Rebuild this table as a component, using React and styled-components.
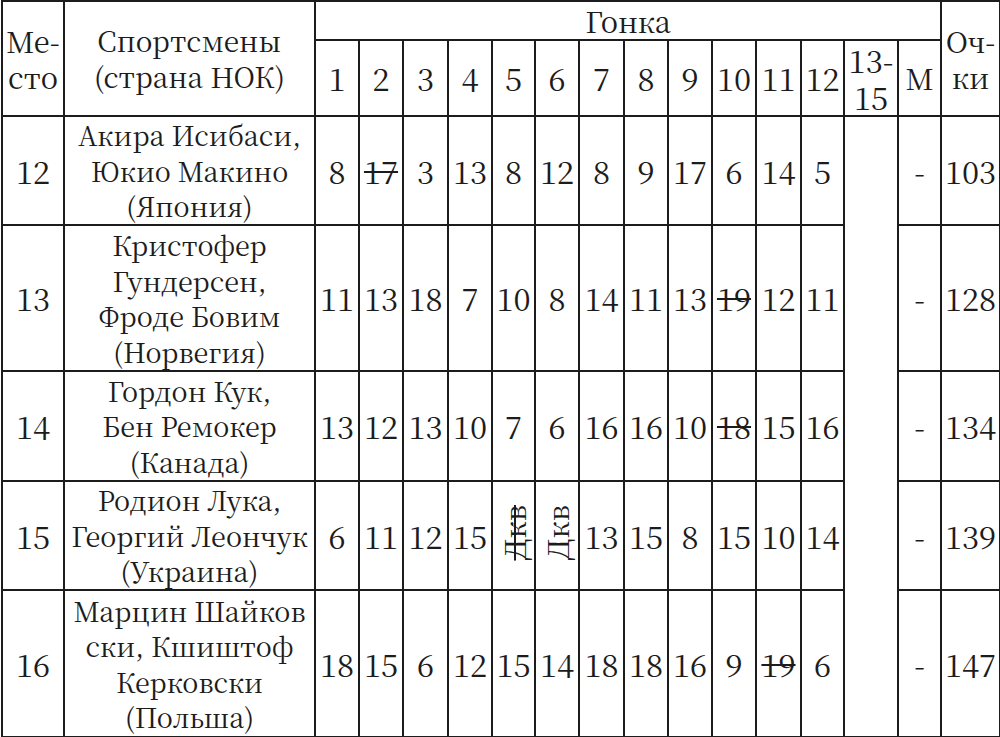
import styled, { createGlobalStyle } from "styled-components";

const GlobalStyle = createGlobalStyle`
  html, body {
    margin: 0;
    padding: 0;
    background: #fff;
  }
  body {
    font-family: "Noto Serif CJK SC", "Liberation Serif", serif;
    color: #1c1c1c;
  }
`

const Table = styled.table`
  border-collapse: collapse;
  table-layout: fixed;
  width: 999px;
  margin-left: 1px;
  color: #1c1c1c;
`

const Row = styled.tr`
  height: ${p => p.$h}px;
`

const Cell = styled.td`
  border: 2px solid #1c1c1c;
  padding: 0;
  font-family: "Noto Serif CJK SC", "Liberation Serif", serif;
  font-size: ${p => p.$size || 31}px;
  font-weight: normal;
  text-align: center;
  vertical-align: middle;
  white-space: nowrap;
  line-height: ${p => p.$lh || "35.5px"};
`

const Struck = styled.span`
  text-decoration: line-through;
  text-decoration-thickness: 2px;
`

const Rotated = styled.span`
  display: inline-block;
  writing-mode: vertical-rl;
  transform: rotate(180deg);
  font-size: 29px;
  line-height: 30px;
  text-decoration: ${p => (p.$struck ? "line-through" : "none")};
  text-decoration-thickness: 2px;
`

const widths = [62, 251, 44, 44, 45, 44, 43, 44, 45, 44, 44, 44, 45, 43, 54, 43, 59]

const rows = [
  {
    place: 12,
    h: 109,
    names: ["Акира Исибаси,", "Юкио Макино", "(Япония)"],
    races: ["8", "~17", "3", "13", "8", "12", "8", "9", "17", "6", "14", "5"],
    points: 103,
  },
  {
    place: 13,
    h: 146,
    names: ["Кристофер", "Гундерсен,", "Фроде Бовим", "(Норвегия)"],
    races: ["11", "13", "18", "7", "10", "8", "14", "11", "13", "~19", "12", "11"],
    points: 128,
  },
  {
    place: 14,
    h: 110,
    names: ["Гордон Кук,", "Бен Ремокер", "(Канада)"],
    races: ["13", "12", "13", "10", "7", "6", "16", "16", "10", "~18", "15", "16"],
    points: 134,
  },
  {
    place: 15,
    h: 109,
    names: ["Родион Лука,", "Георгий Леончук", "(Украина)"],
    races: ["6", "11", "12", "15", "^~Дкв", "^Дкв", "13", "15", "8", "15", "10", "14"],
    points: 139,
  },
  {
    place: 16,
    h: 147,
    names: ["Марцин Шайков", "ски, Кшиштоф", "Керковски", "(Польша)"],
    races: ["18", "15", "6", "12", "15", "14", "18", "18", "16", "9", "~19", "6"],
    points: 147,
  },
]

const RaceValue = ({ value }) => {
  if (value.startsWith("^")) {
    const v = value.slice(1)
    const struck = v.startsWith("~")
    return <Rotated $struck={struck}>{struck ? v.slice(1) : v}</Rotated>
  }
  if (value.startsWith("~")) return <Struck>{value.slice(1)}</Struck>
  return value
}

const Lines = ({ items }) =>
  items.map((t, i) => (
    <span key={i}>
      {t}
      {i < items.length - 1 && <br />}
    </span>
  ))

export default function App() {
  return (
    <>
      <GlobalStyle />
      <Table>
        <colgroup>
          {widths.map((w, i) => (
            <col key={i} style={{ width: w }} />
          ))}
        </colgroup>
        <thead>
          <Row $h={39}>
            <Cell as="th" rowSpan={2} $size={29}>
              Ме-<br />сто
            </Cell>
            <Cell as="th" rowSpan={2} $size={28}>
              Спортсмены<br />(страна НОК)
            </Cell>
            <Cell as="th" colSpan={14} $size={29}>
              Гонка
            </Cell>
            <Cell as="th" rowSpan={2} $size={29}>
              Оч-<br />ки
            </Cell>
          </Row>
          <Row $h={75}>
            {Array.from({ length: 12 }, (_, i) => (
              <Cell key={i}>{i + 1}</Cell>
            ))}
            <Cell $lh="37px">
              13-<br />15
            </Cell>
            <Cell $size={29}>М</Cell>
          </Row>
        </thead>
        <tbody>
          {rows.map((r, ri) => (
            <Row key={r.place} $h={r.h}>
              <Cell>{r.place}</Cell>
              <Cell $size={27}>
                <Lines items={r.names} />
              </Cell>
              {r.races.map((v, i) => (
                <Cell key={i}>
                  <RaceValue value={v} />
                </Cell>
              ))}
              {ri === 0 && <Cell rowSpan={rows.length} />}
              <Cell>-</Cell>
              <Cell>{r.points}</Cell>
            </Row>
          ))}
        </tbody>
      </Table>
    </>
  )
}
